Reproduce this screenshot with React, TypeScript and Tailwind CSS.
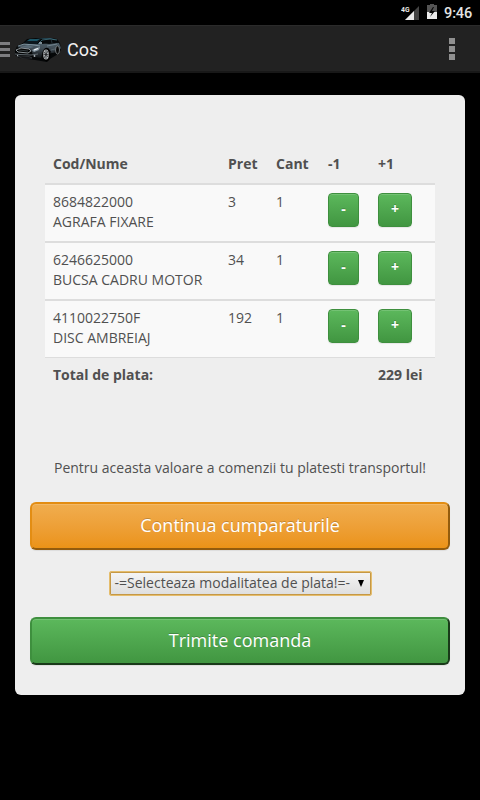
const items = [
  { code: '8684822000', name: 'AGRAFA FIXARE', price: 3, qty: 1 },
  { code: '6246625000', name: 'BUCSA CADRU MOTOR', price: 34, qty: 1 },
  { code: '4110022750F', name: 'DISC AMBREIAJ', price: 192, qty: 1 },
];

const columns = 'grid grid-cols-[175px_48px_52px_50px_1fr] pl-2';
const smallButton =
  'mt-px h-[34px] rounded-[4px] border border-[#3e8f3e] bg-linear-to-b from-[#5cb85c] to-[#419641] pb-[3px] text-center text-[14px] leading-[28px] font-bold text-white shadow-[inset_0_1px_0_rgba(255,255,255,0.15),0_1px_1px_rgba(0,0,0,0.075)] [text-shadow:0_-1px_0_rgba(0,0,0,0.2)]';
const largeButton =
  'h-12 w-full rounded-[6px] border-2 pb-[2px] text-center text-[18px] leading-[41px] text-white shadow-[inset_0_1px_0_rgba(255,255,255,0.15),0_1px_1px_rgba(0,0,0,0.075)] [text-shadow:0_-1px_0_rgba(0,0,0,0.2)]';

function Car() {
  return (
    <svg className="mt-px ml-[4px] h-8 w-12" viewBox="0 0 48 32">
      <defs>
        <linearGradient id="paint" x1="0" y1="0" x2="0" y2="1">
          <stop offset="0" stopColor="#4d5f69" />
          <stop offset="0.4" stopColor="#414d56" />
          <stop offset="1" stopColor="#101315" />
        </linearGradient>
      </defs>
      <path d="M1 18 3 13 9 10 13 6 22 5 37 5 43 6 46 10 47 17 44 21 36 26 33 29 21 27 5 25 1 22Z" fill="#050708" />
      <path d="M3 14 9 11 18 11 28 11 37 9 45 10 47 15 45 18 38 20 34 15 29 18 27 25 20 24 17 17Z" fill="url(#paint)" />
      <path d="M10 10 15 6 27 6 23 11 13 11Z" fill="#0c171d" />
      <path d="M13 8 16 6 26 6 23 8Z" fill="#1c5566" />
      <path d="M22 5 37 5 43 7 30 6Z" fill="#22414e" />
      <path d="M26 10 29 7 37 6 43 8 44 10 35 11Z" fill="#06090b" />
      <path d="M24 11 28 7 36 6 43 7" fill="none" stroke="#4c8594" strokeWidth=".7" />
      <path d="M37 6 38 10" stroke="#2c3b43" strokeWidth=".8" />
      <path d="M4 13 10 11 20 12 26 13" fill="none" stroke="#88a0ac" strokeWidth=".8" />
      <path d="M6 14 14 12 20 14 16 15Z" fill="#5a6c78" />
      <path d="M2 17 7 15 15 16 17 18 14 20 4 19Z" fill="#040505" stroke="#a8b2b8" strokeWidth=".8" />
      <path d="M5 17 14 18" stroke="#4f5a60" strokeWidth=".6" />
      <path d="M18 17 22 15 26 14 25 17 20 19Z" fill="#8b9ba6" />
      <path d="M20 17 24 15.5" stroke="#f1f4f5" strokeWidth="1.1" />
      <path d="M1 21 6 21.5 17 22 24 21" fill="none" stroke="#666f76" strokeWidth=".9" />
      <path d="M3 23 15 23.5 18 25 8 25Z" fill="#000" stroke="#555b60" strokeWidth=".5" />
      <circle cx="3.5" cy="22.5" r=".7" fill="#a3abb0" />
      <circle cx="20.5" cy="23" r=".9" fill="#abb4ba" />
      <path d="M36 20 46 17" stroke="#272d31" strokeWidth="1.2" />
      <ellipse cx="32.5" cy="21.5" rx="4" ry="6.8" fill="#000" />
      <ellipse cx="32" cy="21.5" rx="2.8" ry="5" fill="#b3b8ba" />
      <path d="m32 17v9M30 19l4 5M34 18l-4 7M29.5 21.5h5" stroke="#1b1d1f" strokeWidth=".7" />
      <ellipse cx="43.5" cy="17" rx="2" ry="4" fill="#080909" stroke="#92989b" strokeWidth=".7" />
      <path d="M33 13 43 11" stroke="#8295a0" strokeWidth=".7" />
      <path d="M37 17 41 16" stroke="#65747d" strokeWidth=".7" />
      <path d="M25 9h3v2h-3Z" fill="#7e8e97" />
    </svg>
  );
}

export default function App() {
  return (
    <div className="h-[800px] w-[480px] overflow-hidden bg-black font-['Open_Sans',sans-serif] text-[14px] leading-5 text-[#505050]">
      <div className="flex h-[25px] items-center justify-end pr-2 font-[Roboto,sans-serif] text-[14.5px] font-medium text-[#e4e4e4]">
        <svg className="h-[25px] w-[43px] opacity-99" viewBox="0 0 43 25">
          <path d="M18 6v14H4Z" fill="#454545" />
          <path d="M13 11v9H4Z" fill="#eee" />
          <text x="0" y="12" fill="#eee" fontFamily="Roboto" fontSize="8" fontWeight="700" textLength="8.5" lengthAdjust="spacingAndGlyphs">4G</text>
          <path d="M29 4h4v1h3v7H26V5h3Z" fill="#555" />
          <path d="M26 12h10v7H26Z" fill="#eee" />
          <path d="m32 7-4 6h3l-2 4 5-6h-3l2-4Z" fill="#080808" />
        </svg>
        <span className="w-[28px] pt-[2px] text-[14.5px] tracking-[-0.1px] whitespace-nowrap">9:46</span>
      </div>

      <header className="flex h-12 items-center border-t border-b-2 border-t-[#2b2b2b] border-b-[#181818] bg-[#222] font-[Roboto,sans-serif]">
        <div className="mt-[2px] flex w-[10px] flex-col gap-[3px]">
          <i className="h-[3px] bg-[#7d7d80]" />
          <i className="h-[3px] bg-[#7d7d80]" />
          <i className="h-[3px] bg-[#7d7d80]" />
        </div>
        <Car />
        <h1 className="mt-[2px] ml-[5px] text-[18px] text-[#f1f1f1]">Cos</h1>
        <div className="mr-[25px] ml-auto flex flex-col gap-[2px]">
          <i className="size-[6px] bg-[#909090]" />
          <i className="size-[6px] bg-[#909090]" />
          <i className="size-[6px] bg-[#909090]" />
        </div>
      </header>

      <main className="mx-[15px] mt-[22px] h-[600px] rounded-[6px] bg-[#eee] px-[15px] pt-[51px]">
        <div className="mx-[15px]">
          <div className={`${columns} h-[37px] pt-2 font-bold`}>
            <span>Cod/Nume</span>
            <span>Pret</span>
            <span>Cant</span>
            <span>-1</span>
            <span>+1</span>
          </div>
          {items.map((item) => (
            <div key={item.code} className={`${columns} h-[58px] border-t-2 border-[#ddd] bg-[#f9f9f9] pt-[7px]`}>
              <div>
                {item.code}
                <br />
                {item.name}
              </div>
              <span>{item.price}</span>
              <span>{item.qty}</span>
              <button className={`${smallButton} w-[31px]`}>-</button>
              <button className={`${smallButton} w-[34px]`}>+</button>
            </div>
          ))}
          <div className="flex h-[37px] border-t border-[#ddd] pt-[7px] pl-2 font-bold">
            <span className="w-[325px]">Total de plata:</span>
            <span>229 lei</span>
          </div>
        </div>

        <p className="mt-[64px] text-center">Pentru aceasta valoare a comenzii tu platesti transportul!</p>
        <button className={`${largeButton} mt-[24px] block border-t-[#e38d13] border-r-[#935c0d] border-b-[#935c0d] border-l-[#e38d13] bg-linear-to-b from-[#f0ad4e] to-[#eb9316]`}>
          Continua cumparaturile
        </button>
        <button className="mx-auto mt-[21px] flex h-[25px] w-[263px] items-center rounded-[2px] border border-[#e5bd6c] bg-linear-to-b from-[#f5f5f5] to-[#dedede] pb-[2px] pl-[5px] shadow-[inset_0_0_0_1px_#c59846]">
          <span className="w-[243px] text-left whitespace-nowrap">-=Selecteaza modalitatea de plata!=-</span>
          <svg className="mt-px h-[7px] w-[6px]" viewBox="0 0 6 7"><path d="M0 0h6L3 7Z" fill="#000" /></svg>
        </button>
        <button className={`${largeButton} mt-[21px] block border-t-[#3e8f3e] border-r-[#193a19] border-b-[#193a19] border-l-[#3e8f3e] bg-linear-to-b from-[#5cb85c] to-[#419641]`}>
          Trimite comanda
        </button>
      </main>
    </div>
  );
}
